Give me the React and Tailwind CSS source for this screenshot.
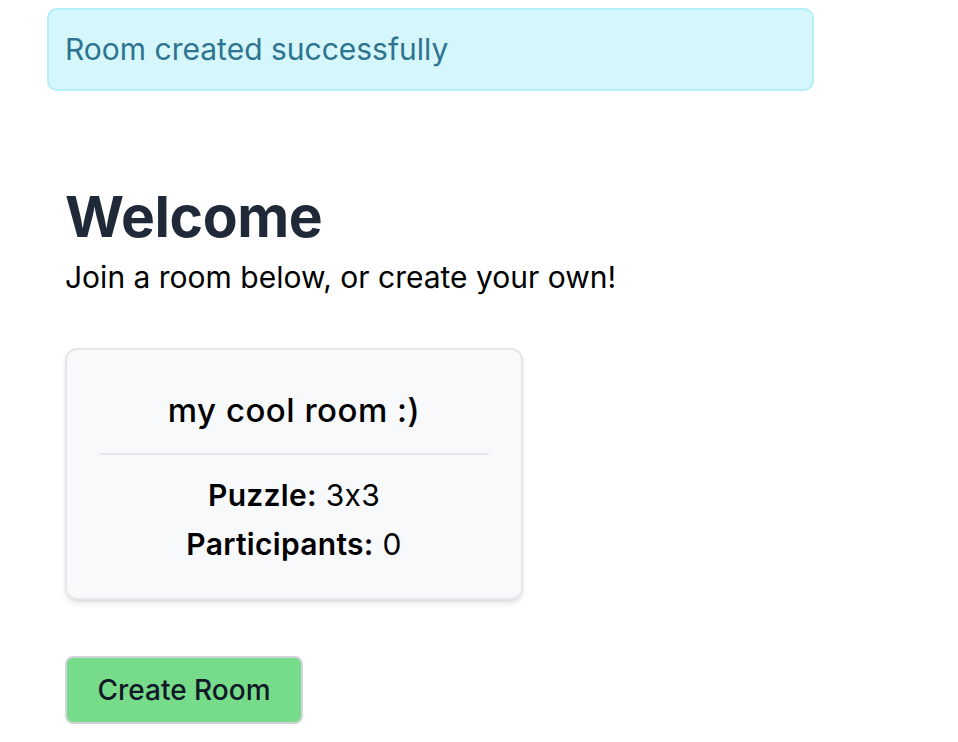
import React from 'react';

const App = () => {
  return (
    <div className="min-h-screen bg-white font-['Inter','Liberation_Sans',sans-serif] [font-feature-settings:'calt'_0]">
      {/* Alert */}
      <div className="pt-2 pl-[47px]">
        <div className="w-[767px] h-[83px] flex items-center px-[16px] rounded-[10px] border-2 border-[#b5eff8] bg-[#d5f7fc] text-[#2e7490] text-[30px]">
          Room created successfully
        </div>
      </div>

      <div className="px-[65px] pt-[96px]">
        <h1 className="text-[57px] leading-[60px] font-bold text-[#1f2937] tracking-[-0.4px]">Welcome</h1>
        <p className="mt-[12px] text-[30px] leading-[36px] text-black">Join a room below, or create your own!</p>

        {/* Room card */}
        <div className="mt-[53px] w-[458px] rounded-[12px] border-2 border-[#e5e7eb] bg-[#f8f9fb] shadow-md px-[32px] pt-[40px] pb-[29px] text-center text-black">
          <h2 className="text-[33px] leading-[40px] font-medium tracking-[0.5px]">my cool room :)</h2>
          <div className="mt-[23px] h-[2px] bg-[#e5e7eb]" />
          <div className="mt-[16px] text-[30px] leading-[49px] tracking-[0.3px]">
            <p><span className="font-semibold">Puzzle:</span> 3x3</p>
            <p><span className="font-semibold">Participants:</span> 0</p>
          </div>
        </div>

        <button className="mt-[56px] w-[238px] h-[68px] rounded-[8px] border-2 border-[#d1d5db] bg-[#77dc8a] text-[28px] font-medium text-[#111827]">
          Create Room
        </button>
      </div>
    </div>
  );
};

export default App;
